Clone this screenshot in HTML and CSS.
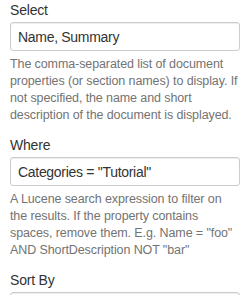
FILE: index.html
```html
<!DOCTYPE html>
<html lang="en">
<head>
    <meta charset="UTF-8">
    <meta name="viewport" content="width=device-width, initial-scale=1.0">
    <title>Query settings</title>
    <link rel="stylesheet" href="styles.css">
</head>
<body>

    <div class="field">
        <label for="select">Select</label>
        <input type="text" id="select" value="Name, Summary">
        <p class="help">The comma-separated list of document properties (or section names) to display. If not specified, the name and short description of the document is displayed.</p>
    </div>

    <div class="field">
        <label for="where">Where</label>
        <input type="text" id="where" value='Categories = "Tutorial"'>
        <p class="help">A Lucene search expression to filter on the results. If the property contains spaces, remove them. E.g. Name = "foo" AND ShortDescription NOT "bar"</p>
    </div>

    <div class="field">
        <label for="sortBy">Sort By</label>
        <input type="text" id="sortBy">
    </div>

</body>
</html>
```

FILE: styles.css
```css
body {
    font-family: 'Liberation Sans', Arial, sans-serif;
    margin: 0;
    padding: 0 9px 0 10px;
    background-color: #fff;
    color: #333;
}
.field {
    margin-bottom: 11px;
}
label {
    display: block;
    font-size: 14px;
    line-height: 20px;
    margin-bottom: 2px;
    letter-spacing: -0.2px;
}
input {
    display: block;
    box-sizing: border-box;
    width: 100%;
    height: 29px;
    margin: 0;
    padding: 4px 7px;
    font-family: inherit;
    font-size: 14px;
    letter-spacing: -0.3px;
    color: #333;
    background: #fff;
    border: 1px solid #ccc;
    border-radius: 3px;
    box-shadow: inset 0 1px 1px rgba(0, 0, 0, 0.075);
}
.help {
    margin: 5px 0 0;
    font-size: 12.5px;
    line-height: 17px;
    letter-spacing: -0.1px;
    color: #737373;
}
```
